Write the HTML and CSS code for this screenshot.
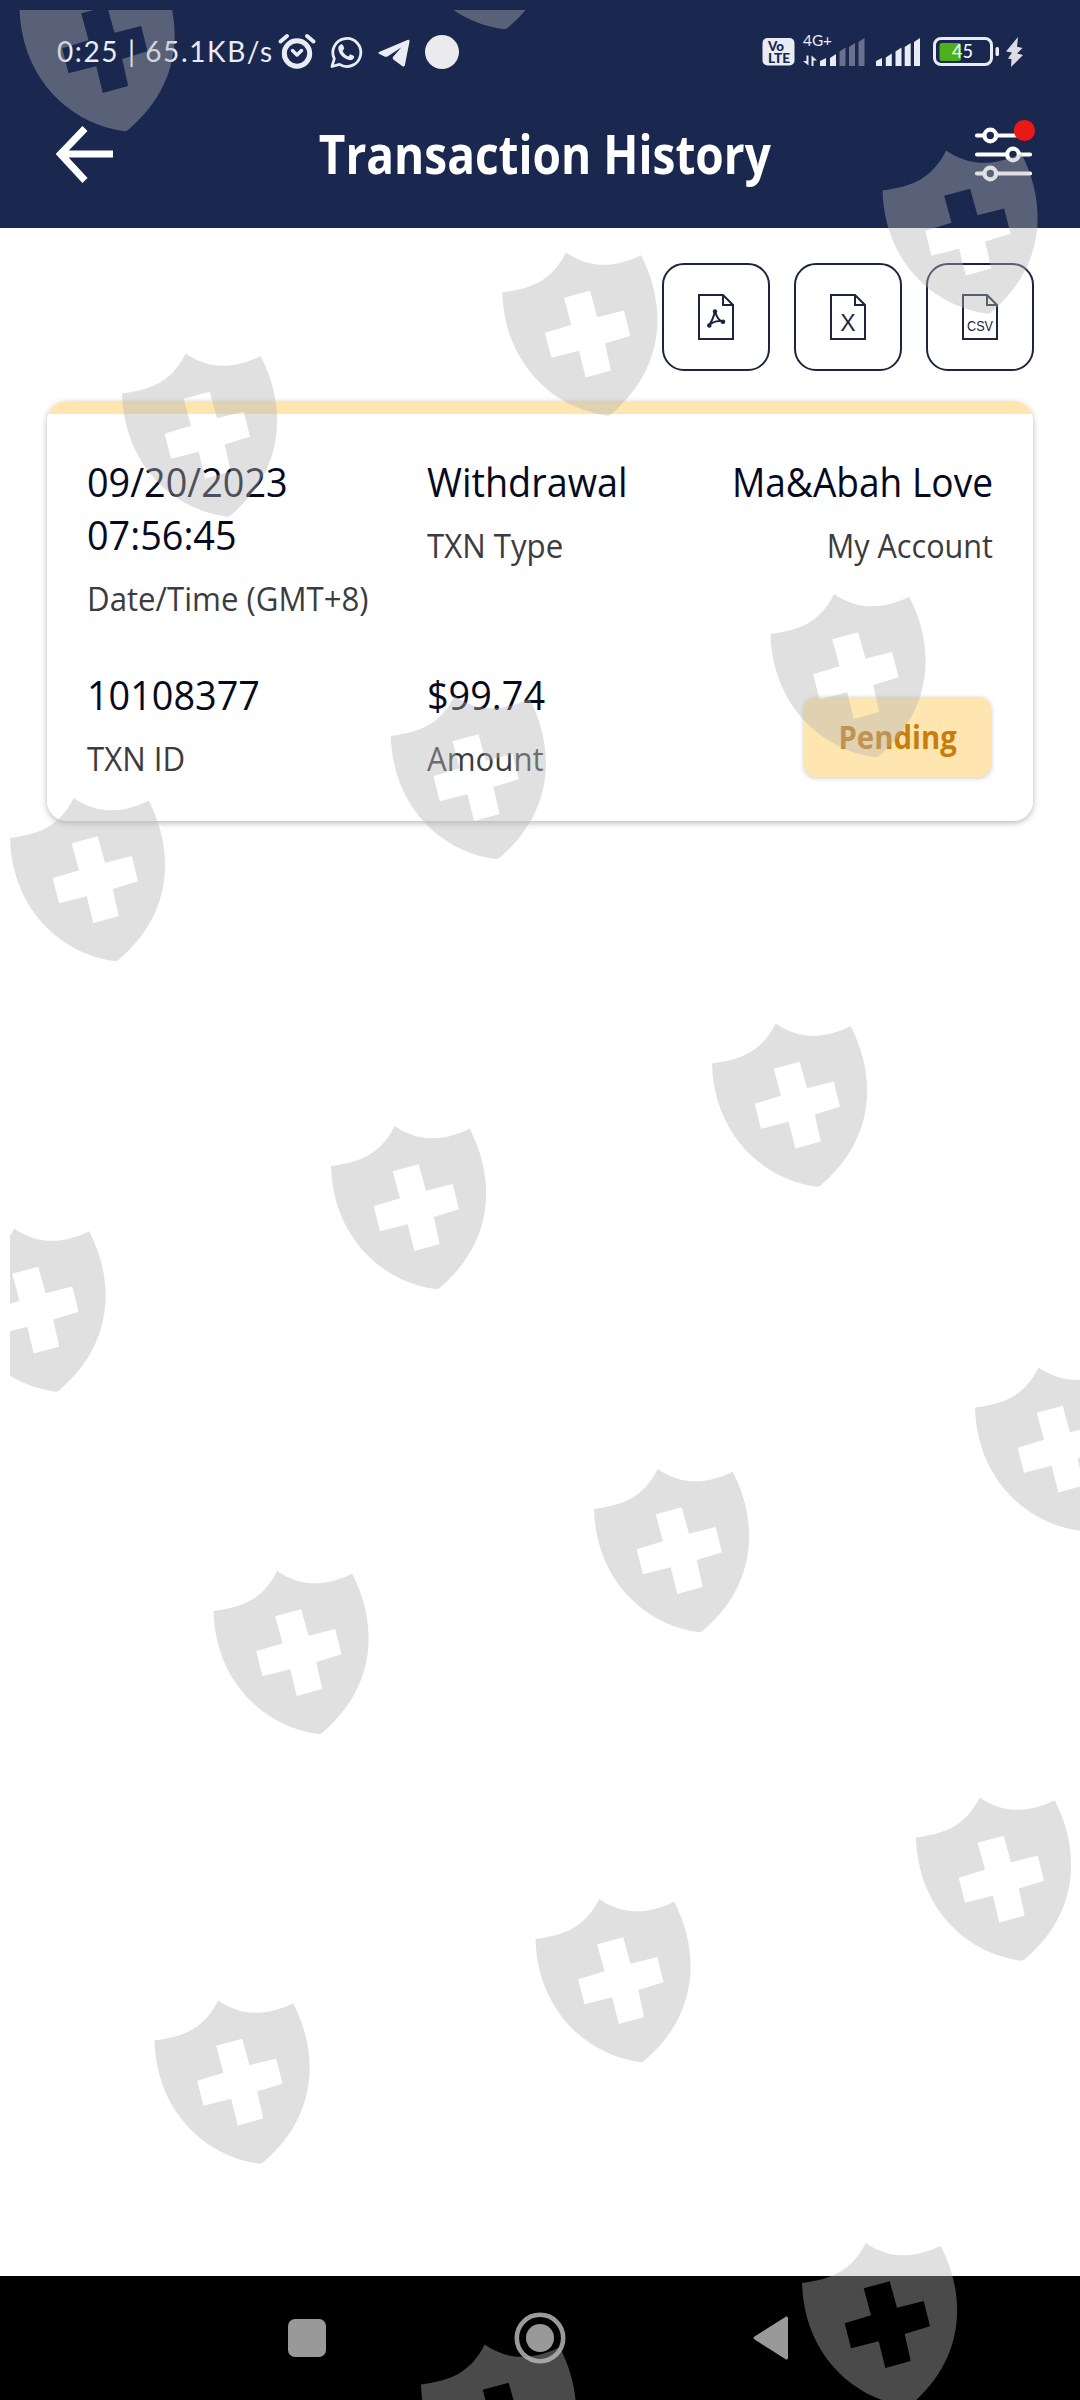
FILE: index.html
```
<!DOCTYPE html>
<html lang="en">
<head>
<meta charset="utf-8">
<title>Transaction History</title>
<link rel="stylesheet" href="styles.css">
</head>
<body>
<div class="screen">
  <header class="header">
    <div class="status">
      <span class="status-text">0:25 | 65.1KB/s</span>
      <svg class="status-icons" width="182" height="40" viewBox="270 30 182 40">
        <g fill="none" stroke="#e9ebf5">
          <circle cx="297" cy="52.500" r="12.700" stroke-width="5"/>
          <path d="M280.500 40.500l6.500-5.500M313.500 40.500l-6.500-5.500" stroke-width="4" stroke-linecap="round"/>
          <path d="M292.500 49.500l4.500 4.500 4.500-4.500" stroke-width="3.500" stroke-linecap="round" stroke-linejoin="round"/>
          <path d="M332 65.500l2.300-7.800a14 14 0 1 1 5.200 5.700z" stroke-width="2.800" stroke-linejoin="round"/>
        </g>
        <path d="M339.500 44.500c1.500-2 3-1.500 3.800.3l1 2.700-1.700 2.500c1.200 2.600 3 4.300 5.700 5.400l2-2.200 3.700 1.800c.6 3.300-2.200 4.600-5 4-5.700-1.300-11-6.800-10.700-12.300 0-.8.500-1.500 1.200-2.200z" fill="#e9ebf5"/>
        <path d="M378.500 52.500Q378 51.500 379 51L408 38.800Q410 38.500 409.500 40.500L404.800 64.500Q404 66 402.500 65.300L393.300 58.500Q391.800 57 393.300 55.500L401.500 46.200 387.500 55.500Q386 56.200 384.500 55.500z" fill="#e9ebf5"/>
        <circle cx="442" cy="51" r="17" fill="#ebebef"/>
      </svg>
      <svg class="status-icons right" width="272" height="40" viewBox="758 30 272 40">
        <rect x="762.500" y="37" width="32" height="27.500" rx="5" fill="#e9ebf5"/>
        <text x="768" y="49.500" class="volte" textLength="16" lengthAdjust="spacingAndGlyphs">Vo</text>
        <text x="768" y="61.500" class="volte" textLength="22" lengthAdjust="spacingAndGlyphs">LTE</text>
        <text x="803" y="44.500" class="net" textLength="29" lengthAdjust="spacingAndGlyphs">4G+</text>
        <path d="M808.500 54.500v10l-5.500-4.500h3.500v-5.500zM811.500 65V54.500l5.500 5h-3.500V65z" fill="#e9ebf5"/>
        <g fill="#e9ebf5">
          <path d="M820 65v-5l6-3v8zM830 65v-8l6-4v12z"/>
          <path d="M839.500 65V50.500l6-4V65zM849 65V46l6-4v23zM858.500 65V41l6-4v28z" fill="#69718e"/>
          <path d="M876 65v-5l6-3v8zM885.800 65v-8.500l6-4V65zM895.500 65V50.500l6-4V65zM904.700 65V46l6-4v23zM914 65V41l6-4v28z"/>
          <rect x="995.500" y="46" width="3.500" height="9" rx="1.500"/>
          <path d="M1018 36L1006 50.500l6 1-4 6 3.500.8-.5 7.700 12-12-6-1.500 5.500-5.500-5.500-1.300z" fill="#dcdde4"/>
        </g>
        <rect x="934.500" y="37.500" width="57" height="26" rx="6.500" fill="none" stroke="#e9ebf5" stroke-width="3"/>
        <rect x="939.500" y="42" width="21.500" height="18" rx="2.500" fill="#4bb01c"/>
        <text x="952" y="56.500" class="battery" textLength="21" lengthAdjust="spacingAndGlyphs">45</text>
      </svg>
    </div>
    <div class="titlebar">
      <svg width="60" height="60" viewBox="55 124 60 60"><path d="M113 154H61M85 128.500L60.500 154 85 180.500" fill="none" stroke="#fff" stroke-width="7"/></svg>
      <h1 class="title">Transaction History</h1>
      <svg width="62" height="72" viewBox="974 118 62 72">
        <g fill="none" stroke="#fff" stroke-width="4.200" stroke-linecap="round">
          <path d="M977 135.500h7M997 135.500h33M977 154.500h29.500M1019.500 154.500h10.500M977 173.500h7M997 173.500h33"/>
          <circle cx="990.300" cy="135.500" r="5.800"/><circle cx="1013" cy="154.500" r="5.800"/><circle cx="990.300" cy="173.500" r="5.800"/>
        </g>
        <circle cx="1024.500" cy="130.500" r="10.600" fill="#e81a18"/>
      </svg>
    </div>
  </header>

  <main class="content">
    <div class="exports">
      <button class="export" aria-label="PDF"><svg width="36" height="46" viewBox="0 0 36 46">
        <path d="M1 1h24l10 10v34H1zM25 1v10h10" class="doc"/>
        <path d="M17 17c-1.500 7-3.500 11-6.500 15M17 17c1.500 6 4 10 8.500 11.500M12 30c4-2.500 9-4 13.500-3" class="doc"/>
        <circle cx="17" cy="17.500" r="1.300" class="doc"/><circle cx="11.300" cy="31.500" r="1.300" class="doc"/><circle cx="25" cy="27.800" r="1.300" class="doc"/>
      </svg></button>
      <button class="export" aria-label="Excel"><svg width="36" height="46" viewBox="0 0 36 46">
        <path d="M1 1h24l10 10v34H1zM25 1v10h10" class="doc"/>
        <text x="18" y="36.500" class="mark-x">X</text>
      </svg></button>
      <button class="export" aria-label="CSV"><svg width="36" height="46" viewBox="0 0 36 46">
        <path d="M1 1h24l10 10v34H1zM25 1v10h10" class="doc"/>
        <text x="5" y="36.500" class="mark-csv" textLength="26" lengthAdjust="spacingAndGlyphs">CSV</text>
      </svg></button>
    </div>

    <section class="card">
      <div class="cell"><div class="value">09/20/2023<br>07:56:45</div><div class="label">Date/Time (GMT+8)</div></div>
      <div class="cell"><div class="value">Withdrawal</div><div class="label">TXN Type</div></div>
      <div class="cell end"><div class="value">Ma&amp;Abah Love</div><div class="label">My Account</div></div>
      <div class="cell"><div class="value">10108377</div><div class="label">TXN ID</div></div>
      <div class="cell"><div class="value">$99.74</div><div class="label">Amount</div></div>
      <div class="badge"><span class="badge-text">Pending</span></div>
    </section>
  </main>

  <nav class="navbar">
    <svg width="38" height="38" viewBox="0 0 38 38"><rect width="38" height="38" rx="7" fill="#999"/></svg>
    <svg width="52" height="52" viewBox="0 0 52 52"><circle cx="26" cy="26" r="23.200" fill="none" stroke="#999" stroke-width="4.600"/><circle cx="26" cy="26" r="14" fill="#999"/></svg>
    <svg width="36" height="44" viewBox="0 0 36 44"><path d="M33.500 2v40L2 22z" fill="#999" stroke="#999" stroke-width="3" stroke-linejoin="round"/></svg>
  </nav>
</div>

<svg class="watermark" width="1070" height="2390" viewBox="10 10 1070 2390">
  <defs>
    <path id="shield" fill-rule="evenodd" d="M0 40C29 36 49 29 63.700 0C87 16 111 16 138.700 2.700C165 54 163 116 108.500 162Q107 163.500 104 163C52 156 2 112 0 40ZM61.700 45.300L87.700 38.300 95 64.700 121.700 58 128 83.300 102.700 91 108.700 118 83.300 125 76.700 98.300 49 105.300 42.700 80.300 69 72.300Z"/>
  </defs>
  <use href="#shield" x="19.500" y="-32"/><use href="#shield" x="399" y="-134"/>
  <use href="#shield" x="122" y="353.500"/><use href="#shield" x="502.300" y="252.500"/><use href="#shield" x="882.500" y="150.500"/>
  <use href="#shield" x="10" y="798"/><use href="#shield" x="390.800" y="696"/><use href="#shield" x="770.500" y="594"/>
  <use href="#shield" x="-49.500" y="1228.500"/><use href="#shield" x="331" y="1126"/><use href="#shield" x="712" y="1023.500"/>
  <use href="#shield" x="213.500" y="1571"/><use href="#shield" x="594" y="1469"/><use href="#shield" x="975" y="1367.500"/>
  <use href="#shield" x="154.500" y="2000.500"/><use href="#shield" x="535.500" y="1899"/><use href="#shield" x="916" y="1797.500"/>
  <use href="#shield" x="421" y="2344.500"/><use href="#shield" x="802" y="2243"/>
</svg>
</body>
</html>
```
FILE: styles.css
```
* { box-sizing: border-box; }
body { margin: 0; background: #fff; font-family: "Open Sans", "Noto Sans", sans-serif; position: relative; }
svg { display: block; flex: none; }
.screen { display: flex; flex-direction: column; width: 1080px; height: 2400px; }

.header { height: 228px; background: #1a284f; }
.status { display: flex; align-items: center; height: 102px; padding: 0 50px 0 57px; }
.status-text { width: 213px; white-space: nowrap; color: #e9ebf5; font: 28px/40px Lato, sans-serif; letter-spacing: 1.600px; }
.status-icons.right { margin-left: auto; }
.status-icons { overflow: visible; }
.volte { font: 900 13px Lato, sans-serif; fill: #1a284f; }
.net { font: 16px Lato, sans-serif; fill: #e9ebf5; }
.battery { font: 20px Lato, sans-serif; fill: #fff; }

.titlebar { display: flex; align-items: center; justify-content: space-between; height: 104px; padding: 0 44px 0 55px; }
.title { margin: -2px -60px 0; color: #fff; font-size: 54.500px; font-weight: 700; line-height: 72px; white-space: nowrap; transform: scaleX(.844); }

.content { flex: 1; padding: 35px 46px 0; }
.exports { display: flex; justify-content: flex-end; gap: 24px; }
.export { display: flex; align-items: center; justify-content: center; width: 108px; height: 108px; padding: 0; border: 2px solid #1b2540; border-radius: 22px; background: #fff; }
.doc { fill: none; stroke: #1b2540; stroke-width: 2; }
.mark-x { font: 23px "Liberation Sans", sans-serif; fill: #1b2540; text-anchor: middle; }
.mark-csv { font: 14px "Liberation Sans", sans-serif; fill: #1b2540; }

.card {
  display: grid; grid-template-columns: 340px 200px 1fr; row-gap: 47px;
  margin: 30px 1px 0; padding: 54px 40px 40px;
  background: linear-gradient(#ffe5b0 0 13px, #fff 13px);
  border-radius: 20px; box-shadow: 0 2px 6px rgba(0, 0, 0, .28);
}
.end { text-align: right; }
.value, .label { transform: scaleX(.945); transform-origin: left; white-space: nowrap; }
.end .value, .end .label { transform: scaleX(.927); transform-origin: right; }
.value { color: #060a20; font-size: 40px; line-height: 53px; }
.label { margin-top: 16px; color: #3c3c3e; font-size: 33px; line-height: 44px; }
.badge {
  display: flex; align-items: center; justify-content: center;
  align-self: end; justify-self: end; width: 187px; height: 80px; margin: 0 2px 4px 0;
  border-radius: 12px; background: #ffe5b0; box-shadow: 0 1px 5px rgba(0, 0, 0, .22);
}
.badge-text { color: #c87d0c; font-size: 32px; font-weight: 700; line-height: 44px; transform: scaleX(.915); }

.navbar { display: flex; align-items: center; justify-content: space-between; height: 124px; padding: 0 291px 0 288px; background: #000; }
.watermark { position: absolute; left: 10px; top: 10px; fill: #b4b4b4; fill-opacity: .41; pointer-events: none; }
```
